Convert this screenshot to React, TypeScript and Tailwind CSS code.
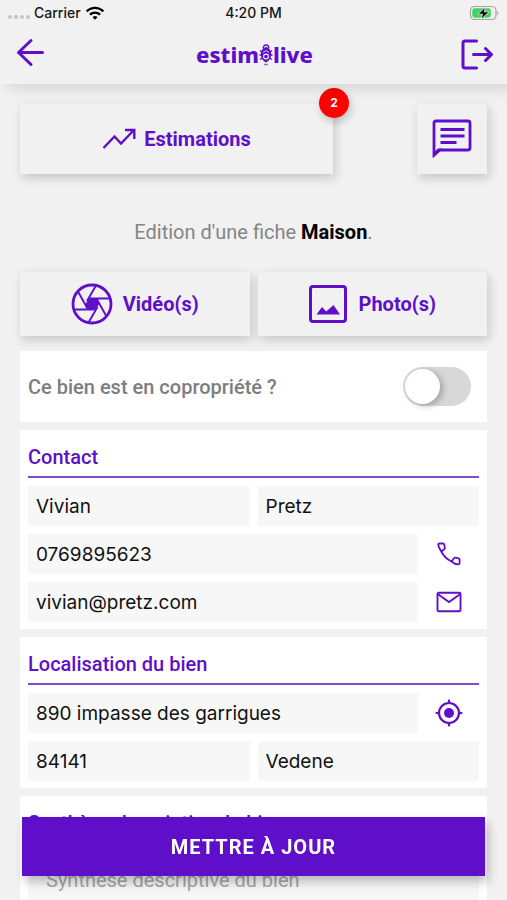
import { useState } from "react";
import type { ReactNode } from "react";
import { MdWifi } from "react-icons/md";

const raised = "bg-[#f1f1f1] shadow-[2px_4px_10px_rgba(0,0,0,0.18)]";

function BackIcon() {
  return (
    <svg viewBox="0 0 28 34" className="h-[34px] w-7" fill="none" stroke="currentColor" strokeWidth="3" strokeLinecap="round" strokeLinejoin="round">
      <path d="M15 2.500 2.500 14.500l12.500 12M2.500 14.500h24" />
    </svg>
  );
}

function LogoutIcon() {
  return (
    <svg viewBox="0 0 32 32" className="size-8" fill="none" stroke="currentColor" strokeWidth="3" strokeLinecap="round" strokeLinejoin="round">
      <path d="M15.500 2H4Q2 2 2 4v23q0 2 2 2h11.500M12.500 15.500H30M24.500 9.500l6 6-6 6" />
    </svg>
  );
}

function OliveMark() {
  return (
    <svg viewBox="0 0 14 24" className="h-6 w-3.5" fill="none" stroke="currentColor">
      <path d="M4.200 5.500Q4.200 2 7 2t2.800 3.500" strokeWidth="1.300" />
      <path d="M7 4c3.500 1 5.500 4 5.200 8-.3 3.500-2.400 6.200-5.200 7.500-2.800-1.300-4.900-4-5.200-7.500C1.500 8 3.500 5 7 4z" fill="currentColor" stroke="none" />
      <path d="M1 7.500 3 9M13 7.500 11 9M.5 12H3M13.500 12H11M1 16.500 3.500 15M13 16.500 10.500 15" strokeWidth="1.300" />
      <circle cx="7" cy="13.500" r="2.400" stroke="#f1f1f1" strokeWidth="1.100" />
      <path d="M4 9.500 7 7.500l3 2" stroke="#f1f1f1" strokeWidth=".8" />
      <path d="M5 21.500h4" strokeWidth="1.400" opacity=".6" />
    </svg>
  );
}

function BatteryIcon() {
  return (
    <svg viewBox="0 0 30 16" className="h-4 w-[30px]">
      <rect x="1.500" y="1.500" width="25.500" height="13" rx="4" fill="#f1f1f1" stroke="#a3a3a3" strokeWidth="1.200" />
      <path d="M28.300 6v4q1.200-.5 1.200-2t-1.200-2z" fill="#a3a3a3" />
      <rect x="3.300" y="3.300" width="18.500" height="9.400" rx="2.400" fill="#43d35f" />
      <path d="m16.500 2-7.500 7.200h4.500l-1.500 5.300 8-7.700h-4.800z" fill="#000" stroke="#f1f1f1" strokeWidth=".8" />
    </svg>
  );
}

function TrendIcon() {
  return (
    <svg viewBox="0 0 34 22" className="h-[22px] w-[34px]" fill="none" stroke="currentColor" strokeWidth="2.400">
      <path d="M1.500 20 12.500 8.500l6.500 7L31.500 2.500M23 2h9.300v9" />
    </svg>
  );
}

function ChatIcon() {
  return (
    <svg viewBox="0 0 40 40" className="size-10" fill="none" stroke="currentColor" strokeWidth="2.800">
      <path d="M2 36V4q0-2 2-2h32q2 0 2 2v25q0 2-2 2H8z" />
      <path d="M1 39v-5l5-4.500h4z" fill="currentColor" stroke="none" />
      <path d="M8.500 10.500h24M8.500 17h24M8.500 23.500h16" />
    </svg>
  );
}

function ApertureIcon() {
  return (
    <svg viewBox="0 0 42 42" className="size-[42px]" fill="none" stroke="currentColor" strokeWidth="1.900">
      <circle cx="21" cy="21" r="19" strokeWidth="2.800" />
      <path d="M25 2.500 16 18M39.500 15.500H18.500M35.500 33.500 25.500 15.500M17.500 39.500 26.500 24M3 26.500h20.500M7 8.500l10 18" />
      <path d="M18 15.500h7l3 5.500-3 5.500h-7.500L14.500 21z" fill="currentColor" stroke="none" />
    </svg>
  );
}

function PictureIcon() {
  return (
    <svg viewBox="0 0 38 38" className="size-[38px]" fill="none" stroke="currentColor" strokeWidth="3">
      <rect x="1.500" y="1.500" width="35" height="35" rx="2.500" />
      <path d="M7.500 29.500 13 22l4.200 4.500L24.500 20 31 29.500z" fill="currentColor" stroke="none" />
    </svg>
  );
}

function PhoneIcon() {
  return (
    <svg viewBox="0 0 24 24" className="size-6" fill="none" stroke="currentColor" strokeWidth="1.800" strokeLinejoin="round">
      <path d="M2.500 1.500H6Q7 1.500 7.200 2.500L7.800 5.500Q8 6.500 7.200 7.200L4.300 9.500Q1.500 5.500 1.200 2.700 1.200 1.500 2.500 1.500z" />
      <path d="M4.300 9.500Q7.500 16 14.500 19.500l2.500-3.300q.6-.8 1.600-.6l3 .7q1 .2 1 1.300v3.500q0 1.300-1.400 1.300-3.500-.1-6.700-2.900" />
    </svg>
  );
}

function MailIcon() {
  return (
    <svg viewBox="0 0 26 22" className="h-[22px] w-[26px]" fill="none" stroke="currentColor" strokeWidth="1.900">
      <rect x="1.500" y="1.800" width="23" height="18.500" rx="1.200" />
      <path d="M2 3.200 13 11 24 3.200" />
    </svg>
  );
}

function LocateIcon() {
  return (
    <svg viewBox="0 0 28 28" className="size-7" fill="none" stroke="currentColor" strokeWidth="2.200" strokeLinecap="round">
      <circle cx="14" cy="14" r="10" />
      <circle cx="14" cy="14" r="5" fill="currentColor" stroke="none" />
      <path d="M14 1.500V4M14 24v2.500M1.500 14H4M24 14h2.500" />
    </svg>
  );
}

function Card({ title, children }: { title: string; children: ReactNode }) {
  return (
    <section className="mt-2 bg-white px-2 pt-2 pb-[7px]">
      <h2 className="flex h-10 items-center border-b-2 border-[#8449c9] text-xl font-medium text-[#5f0fc9]">
        {title}
      </h2>
      <div className="mt-2 grid grid-cols-2 gap-2">{children}</div>
    </section>
  );
}

function Field({ label, value, type = "text" }: { label: string; value: string; type?: string }) {
  return (
    <input
      type={type}
      aria-label={label}
      defaultValue={value}
      className="h-10 w-full min-w-0 flex-1 rounded-xs bg-[#f7f7f7] px-2 font-['Inter',sans-serif] text-[19px] text-[#111] outline-none"
    />
  );
}

function ActionRow({ action, icon, children }: { action: string; icon: ReactNode; children: ReactNode }) {
  return (
    <div className="col-span-2 flex">
      {children}
      <button type="button" aria-label={action} className="flex w-[61px] items-center justify-center text-[#5f0fc9]">
        {icon}
      </button>
    </div>
  );
}

export default function App() {
  const [shared, setShared] = useState(false);

  return (
    <div className="flex h-dvh flex-col bg-[#f1f1f1] font-['Roboto',sans-serif]">
      <header className="relative z-10 h-[84px] shrink-0 bg-[#f1f1f1] shadow-[8px_4px_14px_rgba(0,0,0,0.13)]">
        <div className="grid h-[26px] grid-cols-3 items-center px-2 font-['Inter',sans-serif] text-sm font-medium text-[#161616]">
          <div className="flex items-center gap-1">
            <span className="flex gap-0.5 pt-2" aria-hidden="true">
              {[0, 1, 2, 3].map((dot) => (
                <span key={dot} className="size-1 rounded-full bg-[#c4c4c4]" />
              ))}
            </span>
            <span>Carrier</span>
            <MdWifi className="size-5 text-black" />
          </div>
          <span className="text-center">4:20 PM</span>
          <span className="flex justify-end">
            <BatteryIcon />
          </span>
        </div>
        <div className="flex h-[57px] items-center justify-between px-4 text-[#5f0fc9]">
          <button type="button" aria-label="Retour" className="flex w-8">
            <BackIcon />
          </button>
          <h1 className="flex items-center font-['Noto_Sans',sans-serif] text-[22px] font-extrabold" aria-label="estimolive">
            estim
            <OliveMark />
            live
          </h1>
          <button type="button" aria-label="Se déconnecter" className="-mr-0.5 flex w-8">
            <LogoutIcon />
          </button>
        </div>
      </header>

      <main className="flex-1 overflow-y-auto px-5 pt-5 pb-24 [scrollbar-width:none]">
        <div className="flex gap-[84px] text-xl font-bold text-[#5f0fc9]">
          <button type="button" className={`relative flex h-[70px] flex-1 items-center justify-center gap-2 ${raised}`}>
            <TrendIcon />
            Estimations
            <span className="absolute -top-4 -right-4 flex size-[30px] items-center justify-center rounded-full bg-[#f00] font-['Inter',sans-serif] text-xs text-white shadow-[2px_4px_8px_rgba(0,0,0,0.2)]">
              2
            </span>
          </button>
          <button type="button" aria-label="Messages" className={`flex h-[70px] w-[70px] items-center justify-center ${raised}`}>
            <ChatIcon />
          </button>
        </div>

        <p className="mt-11 text-center text-xl leading-7 text-[#858585]">
          Edition d'une fiche <strong className="text-black">Maison</strong>.
        </p>

        <div className="mt-[26px] grid grid-cols-2 gap-2 text-xl font-bold text-[#5f0fc9]">
          <button type="button" className={`flex h-16 items-center justify-center gap-2.5 ${raised}`}>
            <ApertureIcon />
            Vidéo(s)
          </button>
          <button type="button" className={`flex h-16 items-center justify-center gap-3 ${raised}`}>
            <PictureIcon />
            Photo(s)
          </button>
        </div>

        <label className="mt-[15px] flex h-[71px] items-center justify-between bg-white pr-4 pl-2 text-xl font-medium text-[#7d7d7d]">
          Ce bien est en copropriété ?
          <input
            type="checkbox"
            role="switch"
            checked={shared}
            onChange={(e) => setShared(e.target.checked)}
            className="h-[39px] w-[68px] appearance-none rounded-full bg-[#d8d8d8] p-0.5 before:block before:size-[35px] before:rounded-full before:bg-white before:shadow-[3px_2px_6px_rgba(0,0,0,0.25)] checked:bg-[#5f0fc9] checked:before:ml-[29px]"
          />
        </label>

        <Card title="Contact">
          <Field label="Prénom" value="Vivian" />
          <Field label="Nom" value="Pretz" />
          <ActionRow action="Appeler" icon={<PhoneIcon />}>
            <Field label="Téléphone" value="0769895623" type="tel" />
          </ActionRow>
          <ActionRow action="Envoyer un e-mail" icon={<MailIcon />}>
            <Field label="E-mail" value="vivian@pretz.com" type="email" />
          </ActionRow>
        </Card>

        <Card title="Localisation du bien">
          <ActionRow action="Me localiser" icon={<LocateIcon />}>
            <Field label="Adresse" value="890 impasse des garrigues" />
          </ActionRow>
          <Field label="Code postal" value="84141" />
          <Field label="Ville" value="Vedene" />
        </Card>

        <Card title="Synthèse descriptive du bien">
          <textarea
            aria-label="Synthèse descriptive du bien"
            placeholder="Synthèse descriptive du bien"
            className="col-span-2 h-32 resize-none rounded-xs bg-[#f7f7f7] px-[18px] py-3.5 text-xl text-[#111] outline-none placeholder:text-[#a6a6a6]"
          />
        </Card>
      </main>

      <button
        type="button"
        className="fixed inset-x-[22px] bottom-6 z-10 h-[59px] bg-[#5f0fc9] text-xl font-bold tracking-wider text-white shadow-[3px_6px_10px_rgba(0,0,0,0.25)]"
      >
        METTRE À JOUR
      </button>
    </div>
  );
}
